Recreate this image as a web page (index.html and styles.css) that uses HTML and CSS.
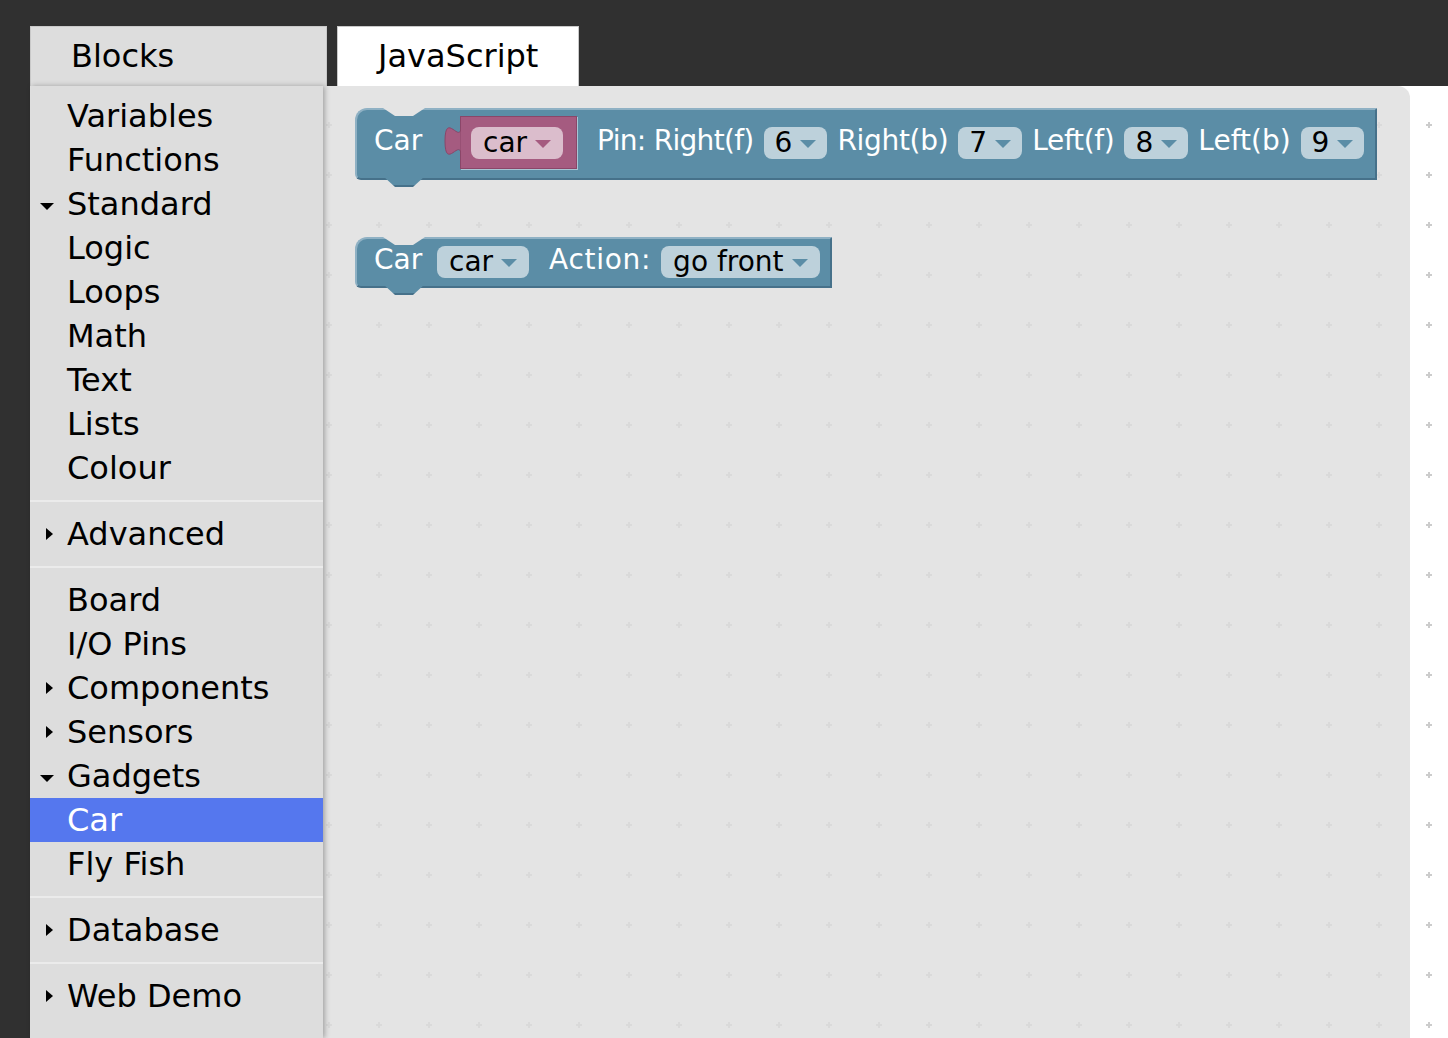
FILE: index.html
```html
<!DOCTYPE html>
<html lang="en">
<head>
<meta charset="utf-8">
<title>Blocks</title>
<link rel="stylesheet" href="styles.css">
</head>
<body>
<div class="tabs">
  <div class="tab tab-blocks">Blocks</div>
  <div class="tab tab-js">JavaScript</div>
</div>
<div class="main">
  <nav class="toolbox">
    <div class="cat">Variables</div>
    <div class="cat">Functions</div>
    <div class="cat open">Standard</div>
    <div class="cat">Logic</div>
    <div class="cat">Loops</div>
    <div class="cat">Math</div>
    <div class="cat">Text</div>
    <div class="cat">Lists</div>
    <div class="cat">Colour</div>
    <div class="sep"></div>
    <div class="cat closed">Advanced</div>
    <div class="sep"></div>
    <div class="cat">Board</div>
    <div class="cat">I/O Pins</div>
    <div class="cat closed">Components</div>
    <div class="cat closed">Sensors</div>
    <div class="cat open">Gadgets</div>
    <div class="cat selected">Car</div>
    <div class="cat">Fly Fish</div>
    <div class="sep"></div>
    <div class="cat closed">Database</div>
    <div class="sep"></div>
    <div class="cat closed">Web Demo</div>
  </nav>
  <div class="workspace">
    <div class="flyout">
      <div class="block b1">
        <span class="lbl lbl-car">Car</span>
        <div class="var">
          <svg class="knob" width="17" height="30" viewBox="0 0 17 30"><path d="M17,0 c0,20 -16,-16 -16,15 s16,-5 16,15 Z" fill="#a55b80" stroke="#8a4669" stroke-width="1"/></svg>
          <div class="field field-var"><span>car</span><i class="arrow"></i></div>
        </div>
        <span class="lbl lbl-pin">Pin: Right(f)</span>
        <div class="field field-pin"><span>6</span><i class="arrow"></i></div>
        <span class="lbl lbl-tight">Right(b)</span>
        <div class="field field-pin"><span>7</span><i class="arrow"></i></div>
        <span class="lbl lbl-tight">Left(f)</span>
        <div class="field field-pin"><span>8</span><i class="arrow"></i></div>
        <span class="lbl">Left(b)</span>
        <div class="field field-pin"><span>9</span><i class="arrow"></i></div>
      </div>
      <div class="block b2">
        <span class="lbl lbl-car">Car</span>
        <div class="field"><span>car</span><i class="arrow"></i></div>
        <span class="lbl lbl-action">Action:</span>
        <div class="field"><span>go front</span><i class="arrow"></i></div>
      </div>
    </div>
  </div>
</div>
</body>
</html>
```
FILE: styles.css
```css
* { box-sizing: border-box; }

body {
  margin: 0;
  width: 1448px;
  height: 1038px;
  overflow: hidden;
  background: #303030;
  font-family: "DejaVu Sans", "Liberation Sans", sans-serif;
  color: #000;
}

.tabs {
  display: flex;
  gap: 10px;
  height: 86px;
  padding: 26px 0 0 30px;
}

.tab {
  height: 60px;
  padding: 0 40px;
  font-size: 32px;
  line-height: 58px;
  border: 1px solid #c9c9c9;
  border-bottom: 0;
  white-space: nowrap;
}

.tab-blocks {
  width: 297px;
  background: #ddd;
}

.tab-js {
  background: #fff;
}

.main {
  display: flex;
  height: 952px;
  padding-left: 30px;
}

.toolbox {
  position: relative;
  z-index: 2;
  flex: none;
  width: 293px;
  padding-top: 8px;
  background: #ddd;
  box-shadow: 2px 0 5px rgba(0, 0, 0, 0.28);
}

.cat {
  position: relative;
  height: 44px;
  padding-left: 37px;
  font-size: 32px;
  line-height: 44px;
  white-space: nowrap;
}

.cat.selected {
  background: #57e;
  color: #fff;
}

.cat.closed::before {
  content: "";
  position: absolute;
  left: 16px;
  top: 16px;
  border-left: 7px solid #000;
  border-top: 6px solid transparent;
  border-bottom: 6px solid transparent;
}

.cat.open::before {
  content: "";
  position: absolute;
  left: 10px;
  top: 21px;
  border-top: 7px solid #000;
  border-left: 7px solid transparent;
  border-right: 7px solid transparent;
}

.sep {
  display: flex;
  align-items: center;
  height: 22px;
}

.sep::after {
  content: "";
  width: 100%;
  height: 2px;
  background: #ebebeb;
}

.workspace {
  flex: 1;
  background-color: #fff;
  background-image: url("data:image/svg+xml,%3Csvg xmlns='http://www.w3.org/2000/svg' width='50' height='50'%3E%3Cpath d='M22 24h6v2h-6zM24 22h2v6h-2z' fill='%23cccccc'/%3E%3C/svg%3E");
  background-position: 31px 14px;
}

.flyout {
  position: relative;
  width: 1087px;
  height: 100%;
  background: rgba(221, 221, 221, 0.8);
  border-top-right-radius: 12px;
}

.block {
  position: absolute;
  left: 32px;
  display: flex;
  align-items: center;
  gap: 10px;
  background: #5b8da6;
  color: #fff;
  font-size: 28px;
  white-space: nowrap;
  border: 2px solid;
  border-color: #8fb1c4 #46718a #46718a #8fb1c4;
  border-radius: 12px 0 0 6px;
}

.block::before {
  content: "";
  position: absolute;
  top: -2px;
  left: 26px;
  width: 42px;
  height: 8px;
  background: #e4e4e4;
  clip-path: polygon(0 0, 42px 0, 30px 8px, 12px 8px);
}

.block::after {
  content: "";
  position: absolute;
  bottom: -9px;
  left: 26px;
  width: 42px;
  height: 11px;
  background: linear-gradient(#5b8da6 0 9px, #46718a 9px);
  clip-path: polygon(0 0, 42px 0, 30px 11px, 12px 11px);
}

.b1 {
  top: 22px;
  height: 72px;
  padding: 0 11px 3px 17px;
}

.b2 {
  top: 151px;
  height: 51px;
  padding: 0 10px 2px 17px;
}

.lbl {
  line-height: 32px;
  margin-bottom: 4px;
}

.lbl-car {
  width: 53px;
}

.lbl-pin {
  margin-left: 10px;
  letter-spacing: -0.7px;
}

.lbl-tight {
  letter-spacing: -0.3px;
}

.lbl-action {
  margin-left: 10px;
  letter-spacing: 0.7px;
}

.var {
  position: relative;
  display: flex;
  align-items: center;
  height: 53px;
  margin-left: 23px;
  padding: 0 13px 0 10px;
  background: #a55b80;
  border: 1px solid #8a4669;
  box-shadow: 1px 1px 0 #a9c5d4;
}

.knob {
  position: absolute;
  left: -17px;
  top: 9px;
}

.field {
  display: flex;
  align-items: center;
  gap: 8px;
  height: 32px;
  padding: 0 12px;
  border-radius: 8px;
  background: rgba(255, 255, 255, 0.6);
  color: #000;
  line-height: 32px;
}

.field-pin {
  padding: 0 11px;
}

.arrow {
  width: 0;
  height: 0;
  margin-top: 3px;
  border-left: 8px solid transparent;
  border-right: 8px solid transparent;
  border-top: 8px solid #5b8da6;
}

.field-var .arrow {
  border-top-color: #a55b80;
}
```
